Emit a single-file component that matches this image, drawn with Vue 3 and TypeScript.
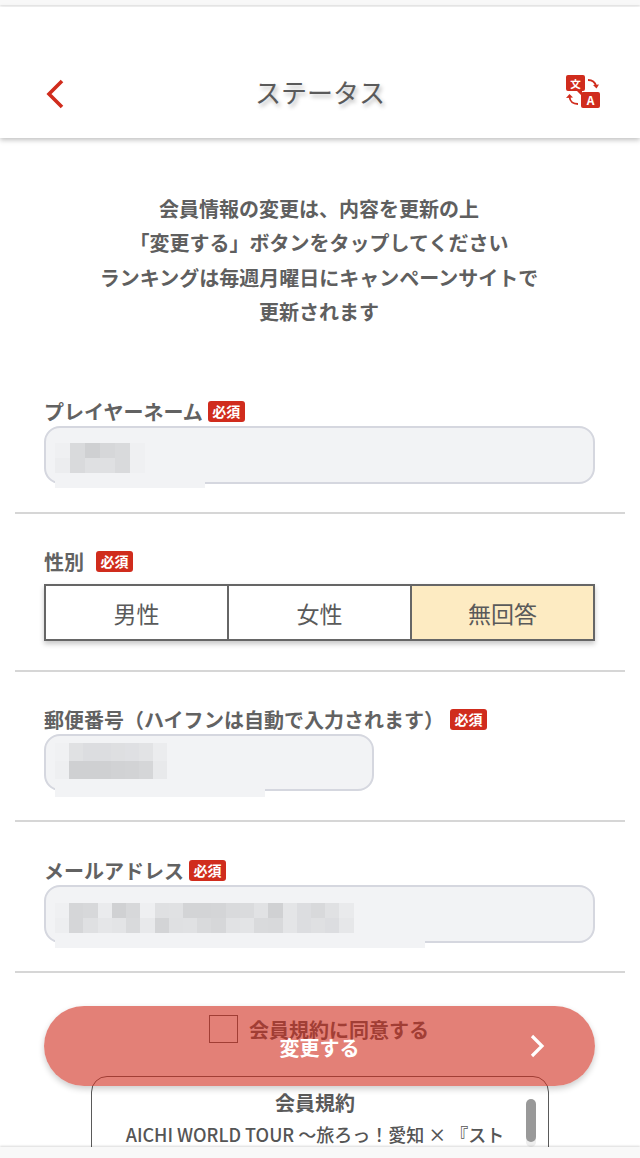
<template>
  <div class="page">
    <div class="top-strip"></div>
    <header class="header">
      <button class="back" aria-label="back">
        <svg width="20" height="30" viewBox="0 0 20 30"><path d="M17 2 L4 15 L17 28" fill="none" stroke="#d02c1d" stroke-width="3.6" /></svg>
      </button>
      <h1 class="title">ステータス</h1>
      <svg class="lang" width="34" height="33" viewBox="0 0 34 33">
        <path d="M2 0h15a2 2 0 0 1 2 2v12a2 2 0 0 1-2 2h-1v5l-5-5H2a2 2 0 0 1-2-2V2a2 2 0 0 1 2-2z" fill="#d02c1d" />
        <path d="M17 17h15a2 2 0 0 1 2 2v12a2 2 0 0 1-2 2H17a2 2 0 0 1-2-2V19a2 2 0 0 1 2-2z" fill="#d02c1d" />
        <text x="9.500" y="12.500" text-anchor="middle" class="glyph" font-size="10.500">文</text>
        <text x="24.500" y="30" text-anchor="middle" class="glyph" font-size="12">A</text>
        <path d="M22 5c4 0 7 2 8 6" fill="none" stroke="#d02c1d" stroke-width="1.8" />
        <path d="M27 10l3.500 3.500 2.500-4z" fill="#d02c1d" />
        <path d="M12 29c-5 0-8-3-8.500-7" fill="none" stroke="#d02c1d" stroke-width="1.8" />
        <path d="M0 23l3.500-4 3.500 3.500z" fill="#d02c1d" />
      </svg>
    </header>

    <p class="intro">
      会員情報の変更は、内容を更新の上<br />
      「変更する」ボタンをタップしてください<br />
      ランキングは毎週月曜日にキャンペーンサイトで<br />
      更新されます
    </p>

    <section class="field first">
      <div class="label">プレイヤーネーム<span class="req">必須</span></div>
      <div class="input tall">
        <div class="pixels" :style="blurStyle(nameBlur)">
          <i v-for="(c, j) in nameBlur.cells" :key="j" :style="{ background: c }"></i>
        </div>
      </div>
    </section>

    <section class="field">
      <div class="label gender-label">性別<span class="req wide">必須</span></div>
      <div class="gender">
        <div v-for="g in genders" :key="g" class="opt" :class="{ on: g === '無回答' }">{{ g }}</div>
      </div>
    </section>

    <section class="field">
      <div class="label">郵便番号（ハイフンは自動で入力されます）<span class="req zip">必須</span></div>
      <div class="input short">
        <div class="pixels" :style="blurStyle(zipBlur)">
          <i v-for="(c, j) in zipBlur.cells" :key="j" :style="{ background: c }"></i>
        </div>
      </div>
    </section>

    <section class="field mail">
      <div class="label">メールアドレス<span class="req">必須</span></div>
      <div class="input tall">
        <div class="pixels" :style="blurStyle(mailBlur)">
          <i v-for="(c, j) in mailBlur.cells" :key="j" :style="{ background: c }"></i>
        </div>
      </div>
    </section>

    <div class="agree">
      <span class="check"></span>
      <span>会員規約に同意する</span>
    </div>

    <div class="terms">
      <div class="terms-title">会員規約</div>
      <div class="terms-text">AICHI WORLD TOUR ～旅ろっ！愛知 × 『スト</div>
      <div class="scroll"></div>
    </div>

    <button class="submit">
      変更する
      <svg class="next" width="18" height="26" viewBox="0 0 18 26"><path d="M3 3 L13 13 L3 23" fill="none" stroke="#fff" stroke-width="3.200" /></svg>
    </button>

    <div class="footer"></div>
  </div>
</template>

<script setup lang="ts">
interface Blur {
  cols: number;
  w: number;
  top: number;
  rows: number[];
  cells: string[];
}

const genders = ['男性', '女性', '無回答'];

const strip = (n: number) => Array(n).fill('#f2f3f5');

const nameBlur: Blur = {
  cols: 10,
  w: 15,
  top: 15,
  rows: [15, 15, 15],
  cells: [
    '#eff0f2', '#d9dadc', '#cfd0d2', '#d6d7d9', '#d9dadc', '#eff0f2', '#f2f3f5', '#f2f3f5', '#f2f3f5', '#f2f3f5',
    '#ecedef', '#d9dadc', '#dfe0e2', '#dfe0e2', '#d9dadc', '#eff0f2', '#f2f3f5', '#f2f3f5', '#f2f3f5', '#f2f3f5',
    ...strip(10),
  ],
};

const zipBlur: Blur = {
  cols: 15,
  w: 14,
  top: 7,
  rows: [18, 18, 18],
  cells: [
    '#f0f1f3', '#e0e1e3', '#dcdde0', '#dcdde0', '#dedfe1', '#dfe0e3', '#e2e3e5', '#ebecee', ...Array(7).fill('#f2f3f5'),
    '#eeeff1', '#cfd0d2', '#cfd0d2', '#cfd0d2', '#d1d2d4', '#d2d3d5', '#d5d6d8', '#e8e9eb', ...Array(7).fill('#f2f3f5'),
    ...strip(15),
  ],
};

const mailBlur: Blur = {
  cols: 26,
  w: 14.23,
  top: 16,
  rows: [15, 15, 15],
  cells: [
    '#eff0f2', '#d5d6d8', '#d7d8da', '#eaebed', '#d0d1d3', '#d7d8da', '#eeeff1', '#dfe0e2', '#e0e1e3', '#d3d4d6', '#d3d4d6',
    '#d4d5d7', '#d9dadc', '#dadbdd', '#e1e2e4', '#d0d1d3', '#e4e5e7', '#dcdde0', '#d8d9db', '#e0e1e3', '#e9eaec', ...Array(5).fill('#f2f3f5'),
    '#edeef0', '#d5d6d8', '#dfe0e2', '#e5e6e8', '#e3e4e6', '#d9dadc', '#e8e9eb', '#d3d4d6', '#dfe0e2', '#e0e1e3', '#d9dadc',
    '#d6d7d9', '#e1e2e4', '#e3e4e6', '#d9dadc', '#d8d9db', '#e4e5e7', '#dcdde0', '#dfe0e2', '#dcdde0', '#e6e7e9', ...Array(5).fill('#f2f3f5'),
    ...strip(26),
  ],
};

const blurStyle = (b: Blur) => ({
  top: `${b.top}px`,
  gridTemplateColumns: `repeat(${b.cols}, ${b.w}px)`,
  gridTemplateRows: b.rows.map((r) => `${r}px`).join(' '),
});
</script>

<style>
body {
  margin: 0;
  background: #fff;
}
</style>

<style scoped>
.page {
  position: relative;
  width: 640px;
  height: 1158px;
  overflow: hidden;
  background: #fff;
  color: #5a5a5a;
  font-family: "Noto Sans CJK JP", "Noto Sans", sans-serif;
}
.top-strip {
  height: 5px;
  background: #f8f8f8;
  box-shadow: 0 1px 2px rgba(0, 0, 0, 0.12);
}
.header {
  position: relative;
  height: 131px;
  margin-top: 2px;
  box-sizing: border-box;
  padding: 0 40px 20px;
  display: grid;
  grid-template-columns: 1fr auto 1fr;
  align-items: end;
  background: #fff;
  box-shadow: 0 2px 5px rgba(0, 0, 0, 0.25);
}
.back {
  padding: 0;
  margin: 0 0 9px 5px;
  border: none;
  background: none;
  display: flex;
}
.title {
  margin: 0 0 7px 0;
  font-size: 26px;
  line-height: 38px;
  font-weight: 400;
  color: #5a5a5a;
  text-shadow: 2px 3px 4px rgba(0, 0, 0, 0.28);
}
.lang {
  justify-self: end;
  margin-bottom: 10px;
}
.glyph {
  fill: #fff;
  font-family: "Noto Sans CJK JP", sans-serif;
  font-weight: 700;
}
.intro {
  margin: 54px 0 0;
  text-align: center;
  font-size: 20px;
  line-height: 34.3px;
  font-weight: 700;
  color: #5f5f5f;
  padding-right: 2px;
}
.field {
  margin: 0 15px;
  padding: 32px 29px 29px;
  border-bottom: 2px solid #d6d6d6;
}
.field.first {
  padding-top: 0;
  padding-bottom: 28px;
  margin-top: 67px;
}
.field.mail {
  padding-top: 33px;
  padding-bottom: 28px;
}
.label {
  display: flex;
  align-items: center;
  height: 30px;
  font-size: 20px;
  font-weight: 700;
  white-space: nowrap;
  color: #626262;
}
.req {
  width: 37px;
  height: 21px;
  margin-left: 5px;
  border-radius: 3px;
  background: #d02c1d;
  color: #fff;
  font-size: 14px;
  font-weight: 700;
  line-height: 21px;
  text-align: center;
}
.req.wide {
  margin-left: 12px;
}
.req.zip {
  margin-left: 6px;
}
.gender-label {
  margin-bottom: 8px;
}
.input {
  position: relative;
  width: 551px;
  height: 57px;
  box-sizing: border-box;
  border: 2px solid #d5d7df;
  border-radius: 16px;
  background: #f2f3f5;
}
.input.tall {
  height: 58px;
}
.input.short {
  width: 330px;
}
.pixels {
  position: absolute;
  left: 9px;
  display: grid;
}
.gender {
  display: grid;
  grid-template-columns: 181px 183px 183px;
  width: 551px;
  height: 57px;
  box-sizing: border-box;
  border: 2px solid #666;
  box-shadow: 0 3px 5px rgba(0, 0, 0, 0.22);
}
.opt {
  display: flex;
  align-items: center;
  justify-content: center;
  font-size: 23px;
  color: #5a5a5a;
  border-left: 2px solid #666;
}
.opt:first-child {
  border-left: none;
}
.opt.on {
  background: #fdebc2;
}
.agree {
  display: flex;
  align-items: center;
  justify-content: center;
  gap: 11px;
  margin-top: 41px;
  height: 30px;
  font-size: 20px;
  font-weight: 700;
  padding-right: 2px;
}
.check {
  width: 29px;
  height: 28px;
  box-sizing: border-box;
  border: 1px solid #5a5a5a;
  background: #fff;
}
.terms {
  position: relative;
  box-sizing: border-box;
  width: 458px;
  height: 120px;
  margin: 32px 0 0 91px;
  padding-right: 10px;
  border: 1px solid #5a5a5a;
  border-radius: 16px;
  text-align: center;
  overflow: hidden;
}
.terms-title {
  margin-top: 11px;
  font-size: 20px;
  line-height: 30px;
  font-weight: 700;
}
.terms-text {
  margin-top: 1px;
  font-size: 18px;
  line-height: 30px;
  font-weight: 500;
  white-space: nowrap;
  color: #555;
}
.scroll {
  position: absolute;
  right: 12px;
  top: 22px;
  width: 10px;
  height: 43px;
  border-radius: 5px;
  background: #999;
  box-shadow: 0 5px 0 #eee;
}
.submit {
  position: absolute;
  left: 44px;
  top: 1006px;
  width: 551px;
  height: 80px;
  padding: 2px 0 0;
  border: none;
  border-radius: 40px;
  background: rgba(208, 44, 29, 0.6);
  color: #fff;
  font-family: inherit;
  font-size: 20px;
  font-weight: 700;
  box-shadow: 0 3px 6px rgba(0, 0, 0, 0.2);
}
.next {
  position: absolute;
  right: 48px;
  top: 27px;
}
.footer {
  position: absolute;
  left: 0;
  right: 0;
  top: 1147px;
  bottom: 0;
  background: #f8f8f8;
  box-shadow: 0 -1px 2px rgba(0, 0, 0, 0.15);
}
</style>
